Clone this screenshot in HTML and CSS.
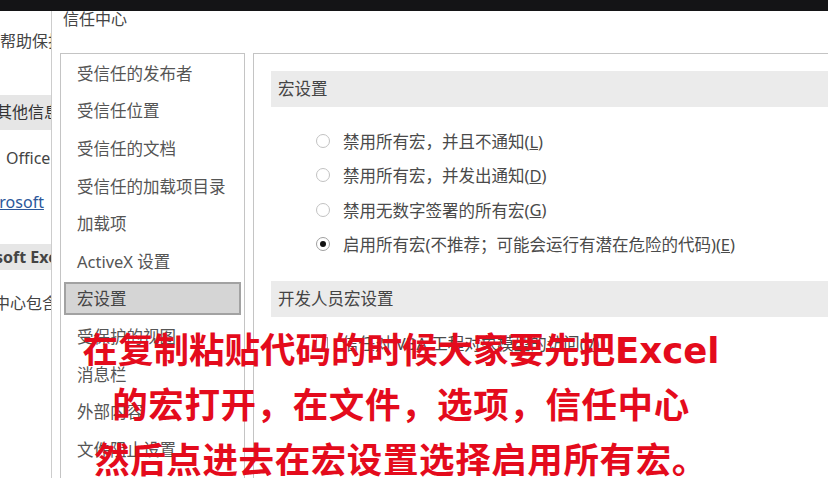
FILE: index.html
```html
<!DOCTYPE html>
<html lang="zh-CN">
<head>
  <meta charset="UTF-8">
  <title>信任中心</title>
  <link rel="stylesheet" href="styles.css">
</head>
<body>
  <div class="topbar"></div>

  <div class="screen">
    <aside class="backdrop">
      <div class="bd-line bd-help">帮助保护</div>
      <div class="bd-band bd-info">其他信息</div>
      <div class="bd-line bd-office">Office</div>
      <div class="bd-line bd-link">Microsoft</div>
      <div class="bd-band bd-excel">Microsoft Excel</div>
      <div class="bd-line bd-heart">中心包含</div>
    </aside>

    <section class="dialog">
      <div class="dialog-title">信任中心</div>

      <div class="dialog-body">
        <ul class="nav">
          <li class="nav-item">受信任的发布者</li>
          <li class="nav-item">受信任位置</li>
          <li class="nav-item">受信任的文档</li>
          <li class="nav-item">受信任的加载项目录</li>
          <li class="nav-item">加载项</li>
          <li class="nav-item">ActiveX 设置</li>
          <li class="nav-item active">宏设置</li>
          <li class="nav-item">受保护的视图</li>
          <li class="nav-item">消息栏</li>
          <li class="nav-item">外部内容</li>
          <li class="nav-item">文件阻止设置</li>
        </ul>

        <div class="panel">
          <div class="section-head">宏设置</div>
          <div class="options">
            <label class="option"><span class="radio"></span>禁用所有宏，并且不通知(<u>L</u>)</label>
            <label class="option"><span class="radio"></span>禁用所有宏，并发出通知(<u>D</u>)</label>
            <label class="option"><span class="radio"></span>禁用无数字签署的所有宏(<u>G</u>)</label>
            <label class="option"><span class="radio checked"></span>启用所有宏(不推荐；可能会运行有潜在危险的代码)(<u>E</u>)</label>
          </div>

          <div class="section-head dev">开发人员宏设置</div>
          <label class="option check-row"><span class="checkbox"></span>信任对 VBA 工程对象模型的访问(<u>V</u>)</label>
        </div>
      </div>
    </section>
  </div>

  <div class="caption">
    <div>在复制粘贴代码的时候大家要先把Excel</div>
    <div class="wide">的宏打开，在文件，选项，信任中心</div>
    <div class="wide">然后点进去在宏设置选择启用所有宏。</div>
  </div>
</body>
</html>
```

FILE: styles.css
```css
body {
  margin: 0;
  height: 478px;
  overflow: hidden;
  background: #ffffff;
  font-family: "Noto Sans", "Noto Sans CJK SC", sans-serif;
  color: #444;
  position: relative;
}
.topbar {
  height: 11px;
  background: #141416;
}
.screen {
  display: flex;
  height: 467px;
}

/* window behind the dialog */
.backdrop {
  width: 51px;
  flex: 0 0 51px;
  overflow: hidden;
  border-right: 1px solid #cdcdcd;
  font-size: 16px;
  white-space: nowrap;
}
.bd-line {
  line-height: 20px;
}
.bd-band {
  background: #e6e6e6;
}
.bd-help {
  margin-top: 20px;
}
.bd-info {
  margin-top: 44px;
  line-height: 35px;
  text-indent: -4px;
  color: #333;
}
.bd-office {
  margin-top: 18px;
  padding-left: 6px;
}
.bd-link {
  margin-top: 24px;
  text-indent: -27px;
  color: #2b579a;
  text-decoration: underline;
}
.bd-excel {
  margin-top: 32px;
  line-height: 26px;
  text-indent: -50px;
  font-weight: bold;
}
.bd-heart {
  margin-top: 23px;
  text-indent: -6px;
}

/* dialog */
.dialog {
  flex: 1;
  overflow: hidden;
  padding-left: 8px;
}
.dialog-title {
  line-height: 16px;
  font-size: 16px;
  padding-left: 3px;
}
.dialog-body {
  display: flex;
  margin-top: 26px;
  gap: 8px;
}
.nav {
  list-style: none;
  margin: 0;
  padding: 0;
  width: 185px;
  flex: 0 0 185px;
  box-sizing: border-box;
  height: 460px;
  border: 1px solid #c4c4c4;
  font-size: 16.5px;
  color: #555;
}
.nav-item {
  height: 37.6px;
  box-sizing: border-box;
  margin: 0 3px;
  padding-left: 13px;
  display: flex;
  align-items: center;
  white-space: nowrap;
}
.nav-item.active {
  height: 33.6px;
  margin: 2px 3px;
  padding-left: 11px;
  background: #d5d5d5;
  border: 2px solid #a2a2a2;
  color: #444;
}

.panel {
  flex: 0 0 620px;
  height: 460px;
  border-top: 1px solid #c4c4c4;
  border-left: 1px solid #c4c4c4;
  font-size: 16.5px;
}
.section-head {
  margin: 17px 0 0 17px;
  height: 36px;
  line-height: 36px;
  padding-left: 7px;
  background: #ebebeb;
  color: #444;
}
.section-head.dev {
  margin-top: 20px;
}
.options {
  padding-top: 17px;
}
.option {
  display: flex;
  align-items: center;
  height: 34.3px;
  padding-left: 62px;
  white-space: nowrap;
  color: #4a4a4a;
}
.radio {
  width: 14px;
  height: 14px;
  box-sizing: border-box;
  border: 1px solid #c2c2c2;
  border-radius: 50%;
  margin-right: 13px;
  position: relative;
  background: #fff;
}
.radio.checked {
  border-color: #a0a0a0;
}
.radio.checked::after {
  content: "";
  position: absolute;
  left: 3px;
  top: 3px;
  width: 6px;
  height: 6px;
  border-radius: 50%;
  background: #111;
}
.check-row {
  margin-top: 9px;
  height: 34px;
}
.checkbox {
  width: 12px;
  height: 12px;
  box-sizing: border-box;
  border: 1px solid #9a9a9a;
  margin-right: 14px;
}

/* red caption laid over the screenshot */
.caption {
  position: absolute;
  left: 0;
  top: 323px;
  width: 802px;
  text-align: center;
  font-family: "DejaVu Sans", "Noto Sans CJK SC", sans-serif;
  font-weight: bold;
  font-size: 35.5px;
  line-height: 55px;
  color: #e40b1c;
  white-space: nowrap;
}
.caption .wide {
  letter-spacing: 0.6px;
}
```
